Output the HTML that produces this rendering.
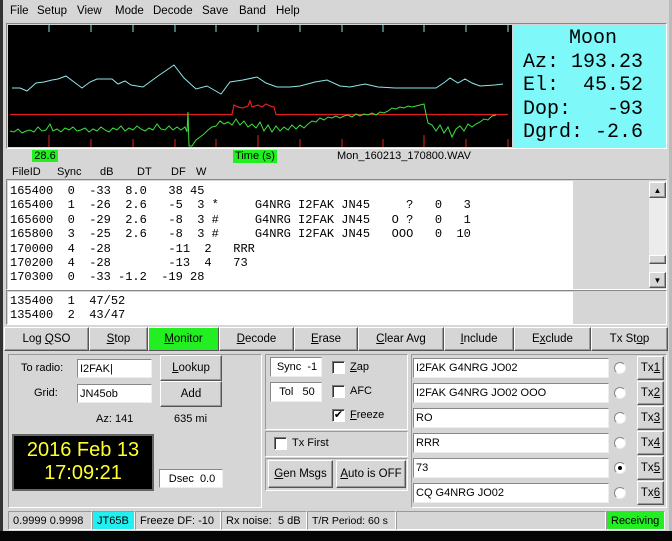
<!DOCTYPE html>
<html><head><style>
*{margin:0;padding:0;box-sizing:border-box}
body{width:672px;height:541px;background:#d6d6d6;font-family:"Liberation Sans",sans-serif;font-size:11px;color:#000;position:relative;overflow:hidden}
.a{position:absolute;white-space:nowrap}
.mono{font-family:"Liberation Mono",monospace;font-size:12px;line-height:14.4px;white-space:pre}
.btn{position:absolute;background:#d6d6d6;border:1px solid;border-color:#fff #555 #555 #fff;box-shadow:inset -1px -1px #999;text-align:center;font-size:11.5px;display:flex;align-items:center;justify-content:center;white-space:nowrap}
.inp{position:absolute;background:#fff;border:1px solid;border-color:#888 #eee #eee #888;font-size:11px;padding-left:2px;display:flex;align-items:center;white-space:nowrap}
.sunk{position:absolute;border:1px solid;border-color:#999 #fff #fff #999}
.cb{position:absolute;width:13px;height:13px;background:#fff;border:1px solid;border-color:#777 #fff #fff #777;box-shadow:inset 1px 1px #333}
.rad{position:absolute;width:12px;height:12px;border-radius:50%;background:#fff;border:1px solid #888;border-right-color:#eee;border-bottom-color:#eee}
.st{position:absolute;top:511px;height:19px;border:1px solid;border-color:#999 #fff #fff #999;display:flex;align-items:center;padding-left:4px;font-size:11px;white-space:nowrap;overflow:hidden}
u{text-decoration:underline}
</style></head><body>
<div class="a" style="left:0;top:0;width:3px;height:532px;background:#333"></div>
<div class="a" style="left:669px;top:0;width:3px;height:532px;background:#bbb"></div>
<div class="a" style="left:0;top:531px;width:672px;height:10px;background:#050505"></div>
<!-- menu -->
<div class="a" style="top:5px;left:10px;font-size:11.5px">File</div>
<div class="a" style="top:5px;left:37px;font-size:11.5px">Setup</div>
<div class="a" style="top:5px;left:77px;font-size:11.5px">View</div>
<div class="a" style="top:5px;left:115px;font-size:11.5px">Mode</div>
<div class="a" style="top:5px;left:153px;font-size:11.5px">Decode</div>
<div class="a" style="top:5px;left:202px;font-size:11.5px">Save</div>
<div class="a" style="top:5px;left:239px;font-size:11.5px">Band</div>
<div class="a" style="top:5px;left:276px;font-size:11.5px">Help</div>
<!-- graph -->
<div class="a" style="left:6px;top:23px;width:661px;height:126px;border:1px solid;border-color:#888 #fff #fff #888"></div>
<svg class="a" style="left:8px;top:25px" width="504" height="122" viewBox="8 25 504 122">
<rect x="8" y="25" width="504" height="122" fill="#000"/>
<g stroke="#7fe6e6" stroke-width="1">
<line x1="49" y1="25" x2="49" y2="32"/><line x1="91" y1="25" x2="91" y2="32"/><line x1="133" y1="25" x2="133" y2="32"/><line x1="175" y1="25" x2="175" y2="32"/><line x1="216" y1="25" x2="216" y2="32"/><line x1="258" y1="25" x2="258" y2="32"/><line x1="300" y1="25" x2="300" y2="32"/><line x1="342" y1="25" x2="342" y2="32"/><line x1="383" y1="25" x2="383" y2="32"/><line x1="424" y1="25" x2="424" y2="32"/><line x1="466" y1="25" x2="466" y2="32"/><line x1="508" y1="25" x2="508" y2="32"/>
</g>
<g stroke="#e02020" stroke-width="1">
<line x1="49" y1="135" x2="49" y2="147"/><line x1="91" y1="139" x2="91" y2="147"/><line x1="133" y1="139" x2="133" y2="147"/><line x1="175" y1="139" x2="175" y2="147"/><line x1="216" y1="139" x2="216" y2="147"/><line x1="258" y1="135" x2="258" y2="147"/><line x1="300" y1="139" x2="300" y2="147"/><line x1="342" y1="139" x2="342" y2="147"/><line x1="383" y1="139" x2="383" y2="147"/><line x1="424" y1="135" x2="424" y2="147"/><line x1="466" y1="139" x2="466" y2="147"/><line x1="508" y1="139" x2="508" y2="147"/>
</g>
<polyline fill="none" stroke="#8ee8e8" stroke-width="1" points="12,88 20,88 27,91 36,83 44,82 52,80 58,79 66,76 74,82 82,88 90,82 97,79 104,79 112,79 118,84 125,81 131,85 143,87 158,76 174,65 184,78 196,89 207,86 214,90 221,94 230,82 243,80 257,77 266,83 277,87 290,87 300,86 315,82 327,80 340,86 350,87 365,84 378,87 395,88 420,88 436,88 445,82 450,78 458,83 465,79 472,83 480,86 495,85 503,84"/>
<polyline fill="none" stroke="#e02020" stroke-width="1.2" points="10,114.5 232,114.5 234,105 238,107 243,108 248,106 250,101 252,107 258,105 262,107 266,104 270,106 274,107 276,114.5 508,114.5"/>
<polyline fill="none" stroke="#3ee03e" stroke-width="1" points="10,131 14,132 18,129 22,133 26,131 30,130 34,132 38,127 42,131 46,130 50,124 53,131 57,129 61,132 65,128 69,130 73,127 77,131 81,130 85,128 89,132 93,129 97,131 101,127 105,130 109,132 113,128 117,130 121,126 125,131 129,128 133,130 137,126 141,129 145,131 149,128 153,130 157,124 161,129 165,130 169,126 173,130 177,127 181,130 185,127 187,132 188,112 189,146 192,146 196,140 200,137 204,134 208,130 212,127 216,126 220,121 224,124 228,122 232,125 236,119 240,125 244,121 248,127 252,124 256,128 260,122 264,131 268,125 272,132 276,126 280,131 284,127 288,130 292,125 296,129 300,125 304,128 308,124 312,121 316,122 320,118 324,120 328,117 332,118 336,116 340,118 344,116 348,115 352,117 356,114 360,116 364,114 368,115 372,113 376,115 380,112 384,113 388,111 392,108 396,109 400,107 404,108 408,106 412,107 416,106 420,105 424,104 426,114 428,123 432,125 436,131 440,125 444,133 448,127 452,137 456,129 460,126 464,131 468,124 472,127 476,124 480,122 484,119 488,120 492,116 496,115"/>
</svg>
<div class="a" style="left:513px;top:25px;width:152px;height:122px;background:#7ff8fa;font-family:'Liberation Mono',monospace;font-size:20px;line-height:23.5px;padding-top:2px">
<div style="text-align:center;padding-left:8px">Moon</div>
<div style="white-space:pre;padding-left:10px">Az: 193.23</div>
<div style="white-space:pre;padding-left:10px">El:  45.52</div>
<div style="white-space:pre;padding-left:10px">Dop:   -93</div>
<div style="white-space:pre;padding-left:10px">Dgrd: -2.6</div>
</div>
<!-- labels -->
<div class="a" style="left:32px;top:150px;width:26px;height:12px;background:#20f020;font-size:11px;text-align:center;line-height:12px">28.6</div>
<div class="a" style="left:233px;top:150px;width:44px;height:13px;background:#20f020;font-size:11px;text-align:center;line-height:13px">Time (s)</div>
<div class="a" style="left:337px;top:150px;font-size:11px">Mon_160213_170800.WAV</div>
<div class="a" style="left:12px;top:166px">FileID</div>
<div class="a" style="left:57px;top:166px">Sync</div>
<div class="a" style="left:100px;top:166px">dB</div>
<div class="a" style="left:137px;top:166px">DT</div>
<div class="a" style="left:171px;top:166px">DF</div>
<div class="a" style="left:196px;top:166px">W</div>
<!-- text area -->
<div class="a" style="left:6px;top:179px;width:661px;height:111px;border:1px solid;border-color:#888 #fff #fff #888"></div>
<div class="a mono" style="left:8px;top:181px;width:565px;height:108px;background:#fff;padding:3px 0 0 2px">165400  0  -33  8.0   38 45
165400  1  -26  2.6   -5  3 *     G4NRG I2FAK JN45     ?   0   3
165600  0  -29  2.6   -8  3 #     G4NRG I2FAK JN45   O ?   0   1
165800  3  -25  2.6   -8  3 #     G4NRG I2FAK JN45   OOO   0  10
170000  4  -28        -11  2   RRR
170200  4  -28        -13  4   73
170300  0  -33 -1.2  -19 28</div>
<div class="a" style="left:649px;top:181px;width:17px;height:107px;background:#ececec"></div>
<div class="btn" style="left:649px;top:182px;width:17px;height:16px;font-size:8px">▲</div>
<div class="btn" style="left:649px;top:255px;width:17px;height:9px"></div>
<div class="btn" style="left:649px;top:272px;width:17px;height:16px;font-size:8px">▼</div>
<div class="a" style="left:6px;top:290px;width:661px;height:35px;border:1px solid;border-color:#888 #fff #fff #888"></div>
<div class="a mono" style="left:8px;top:292px;width:565px;height:32px;background:#fff;padding:2px 0 0 2px">135400  1  47/52
135400  2  43/47</div>
<!-- buttons -->
<div class="btn" style="left:4px;top:327px;width:85px;height:24px"><span>Log <u>Q</u>SO</span></div>
<div class="btn" style="left:89px;top:327px;width:59px;height:24px"><span><u>S</u>top</span></div>
<div class="btn" style="left:148px;top:327px;width:71px;height:24px;background:#22ee22"><span><u>M</u>onitor</span></div>
<div class="btn" style="left:219px;top:327px;width:75px;height:24px"><span><u>D</u>ecode</span></div>
<div class="btn" style="left:294px;top:327px;width:64px;height:24px"><span><u>E</u>rase</span></div>
<div class="btn" style="left:358px;top:327px;width:86px;height:24px"><span><u>C</u>lear Avg</span></div>
<div class="btn" style="left:444px;top:327px;width:70px;height:24px"><span><u>I</u>nclude</span></div>
<div class="btn" style="left:514px;top:327px;width:77px;height:24px"><span>E<u>x</u>clude</span></div>
<div class="btn" style="left:591px;top:327px;width:77px;height:24px"><span>Tx St<u>o</u>p</span></div>
<!-- left panel -->
<div class="sunk" style="left:8px;top:354px;width:254px;height:154px"></div>
<div class="a" style="left:21px;top:362px">To radio:</div>
<div class="inp" style="left:77px;top:359px;width:75px;height:19px">I2FAK|</div>
<div class="btn" style="left:160px;top:355px;width:62px;height:26px"><span><u>L</u>ookup</span></div>
<div class="a" style="left:34px;top:387px">Grid:</div>
<div class="inp" style="left:77px;top:384px;width:75px;height:19px">JN45ob</div>
<div class="btn" style="left:160px;top:381px;width:62px;height:26px">Add</div>
<div class="a" style="left:96px;top:413px">Az: 141</div>
<div class="a" style="left:174px;top:413px">635 mi</div>
<div class="a" style="left:12px;top:434px;width:142px;height:57px;background:#000;border:2px solid #666;color:#ffff30;font-size:20px;line-height:23px;text-align:center;padding-top:3px">2016 Feb 13<br>17:09:21</div>
<div class="inp" style="left:159px;top:469px;width:64px;height:19px;justify-content:center">Dsec&nbsp; 0.0</div>
<!-- middle -->
<div class="sunk" style="left:265px;top:354px;width:143px;height:76px"></div>
<div class="inp" style="left:270px;top:357px;width:52px;height:20px;justify-content:center">Sync&nbsp; -1</div>
<div class="inp" style="left:270px;top:382px;width:52px;height:20px;justify-content:center">Tol&nbsp;&nbsp; 50</div>
<div class="cb" style="left:332px;top:361px"></div><div class="a" style="left:350px;top:361px"><u>Z</u>ap</div>
<div class="cb" style="left:332px;top:385px"></div><div class="a" style="left:350px;top:385px">AFC</div>
<div class="cb" style="left:332px;top:409px;font-size:11px;line-height:10px;text-align:center">✔</div><div class="a" style="left:350px;top:409px"><u>F</u>reeze</div>
<div class="sunk" style="left:265px;top:431px;width:143px;height:26px"></div>
<div class="cb" style="left:274px;top:437px"></div><div class="a" style="left:292px;top:437px">Tx First</div>
<div class="sunk" style="left:265px;top:458px;width:143px;height:33px"></div>
<div class="btn" style="left:268px;top:460px;width:65px;height:28px"><span><u>G</u>en Msgs</span></div>
<div class="btn" style="left:336px;top:460px;width:70px;height:28px"><span><u>A</u>uto is OFF</span></div>
<!-- right -->
<div class="sunk" style="left:411px;top:354px;width:256px;height:154px"></div>
<div class="inp" style="left:413px;top:358px;width:196px;height:20px">I2FAK G4NRG JO02</div>
<div class="inp" style="left:413px;top:383px;width:196px;height:20px">I2FAK G4NRG JO02 OOO</div>
<div class="inp" style="left:413px;top:408px;width:196px;height:20px">RO</div>
<div class="inp" style="left:413px;top:433px;width:196px;height:20px">RRR</div>
<div class="inp" style="left:413px;top:458px;width:196px;height:20px">73</div>
<div class="inp" style="left:413px;top:483px;width:196px;height:20px">CQ G4NRG JO02</div>
<div class="rad" style="left:614px;top:362px"></div>
<div class="rad" style="left:614px;top:387px"></div>
<div class="rad" style="left:614px;top:412px"></div>
<div class="rad" style="left:614px;top:437px"></div>
<div class="rad" style="left:614px;top:462px"><div style="width:4px;height:4px;background:#000;border-radius:50%;margin:3px"></div></div>
<div class="rad" style="left:614px;top:487px"></div>
<div class="btn" style="left:637px;top:356px;width:27px;height:24px"><span>Tx<u>1</u></span></div>
<div class="btn" style="left:637px;top:381px;width:27px;height:24px"><span>Tx<u>2</u></span></div>
<div class="btn" style="left:637px;top:406px;width:27px;height:24px"><span>Tx<u>3</u></span></div>
<div class="btn" style="left:637px;top:431px;width:27px;height:24px"><span>Tx<u>4</u></span></div>
<div class="btn" style="left:637px;top:456px;width:27px;height:24px"><span>Tx<u>5</u></span></div>
<div class="btn" style="left:637px;top:481px;width:27px;height:24px"><span>Tx<u>6</u></span></div>
<!-- status -->
<div class="st" style="left:8px;width:84px">0.9999 0.9998</div>
<div class="st" style="left:92px;width:43px;background:#22f0f0">JT65B</div>
<div class="st" style="left:135px;width:86px">Freeze DF: -10</div>
<div class="st" style="left:221px;width:86px">Rx noise:&nbsp; 5 dB</div>
<div class="st" style="left:307px;width:89px;font-size:10.5px">T/R Period: 60 s</div>
<div class="st" style="left:396px;width:210px"></div>
<div class="st" style="left:606px;width:59px;background:#22ee22">Receiving</div>
</body></html>
